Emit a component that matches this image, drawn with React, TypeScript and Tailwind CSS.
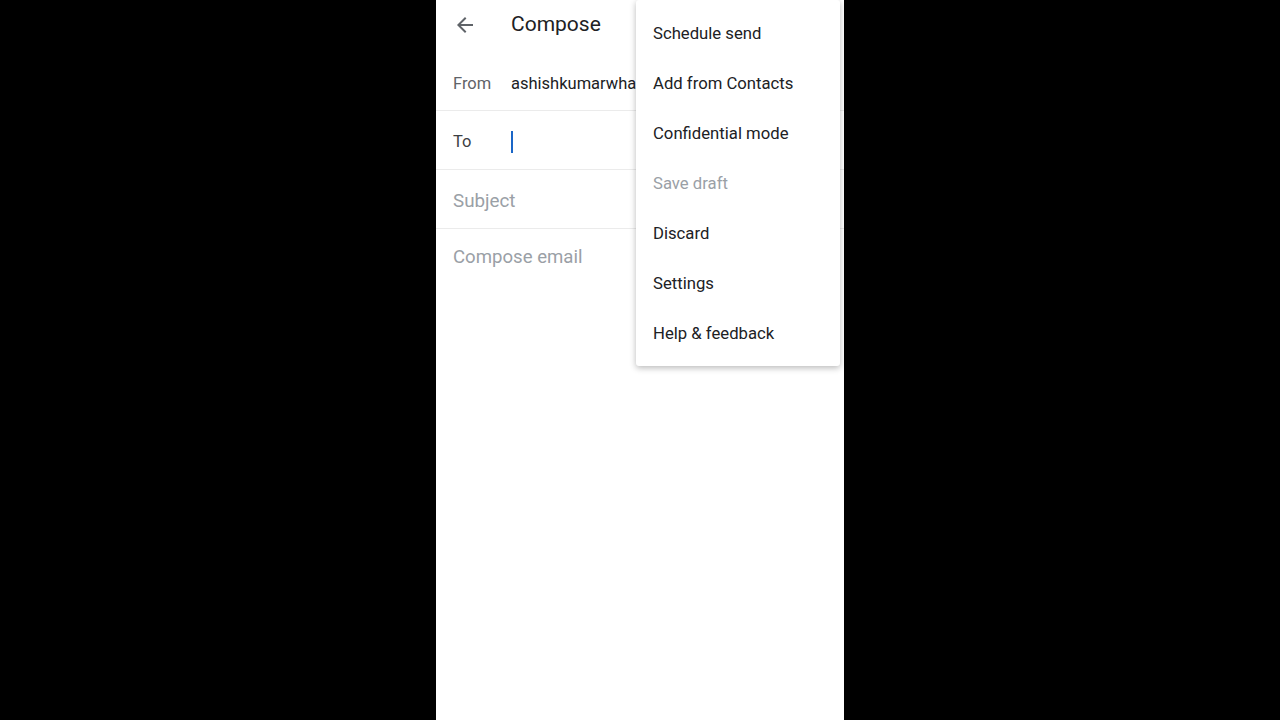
import React from "react"

const menuItems = [
  { label: "Schedule send" },
  { label: "Add from Contacts" },
  { label: "Confidential mode" },
  { label: "Save draft", disabled: true },
  { label: "Discard" },
  { label: "Settings" },
  { label: "Help & feedback" },
]

const App = () => {
  return (
    <div className="w-full h-[720px] bg-black flex justify-center overflow-hidden" style={{ fontFamily: "Roboto, 'Liberation Sans', sans-serif" }}>
      <div className="w-[408px] h-full bg-white relative">
        <header className="h-[50px] flex items-center pl-[17px]">
          <svg width="24" height="24" viewBox="0 0 24 24" className="fill-[#5f6368]">
            <path d="M20 11H7.83l5.59-5.59L12 4l-8 8 8 8 1.41-1.41L7.83 13H20v-2z" />
          </svg>
          <h1 className="ml-[34px] text-[21px] text-[#202124]">Compose</h1>
        </header>

        <div className="mt-[5px] h-[56px] flex items-center pl-[17px] pt-[4px] border-b border-[#ebebeb]">
          <span className="w-[58px] text-[16.5px] text-[#5f6368]">From</span>
          <span className="w-[125px] overflow-hidden text-[16.5px] text-[#202124] whitespace-nowrap">ashishkumarwhale@gmail.com</span>
        </div>

        <div className="h-[59px] flex items-center pl-[17px] pt-[4px] border-b border-[#ebebeb]">
          <span className="w-[58px] text-[16.5px] text-[#3c4043]">To</span>
          <span className="w-[2px] h-[22px] bg-[#1a66c7]" />
        </div>

        <div className="h-[59px] flex items-center pl-[17px] pt-[4px] border-b border-[#ebebeb]">
          <span className="text-[18.8px] text-[#9aa0a6]">Subject</span>
        </div>

        <div className="pt-[15px] pl-[17px]">
          <span className="text-[18.6px] text-[#9aa0a6]">Compose email</span>
        </div>

        <ul className="absolute top-0 right-[4px] w-[204px] bg-white rounded-[3px] pt-[9px] pb-[7px] shadow-[0_2px_6px_rgba(0,0,0,0.28)]">
          {menuItems.map((item) => (
            <li
              key={item.label}
              className={`h-[50px] flex items-center pl-[17px] text-[16.7px] ${
                item.disabled ? "text-[#9aa0a6]" : "text-[#202124]"
              }`}
            >
              {item.label}
            </li>
          ))}
        </ul>
      </div>
    </div>
  )
}

export default App
